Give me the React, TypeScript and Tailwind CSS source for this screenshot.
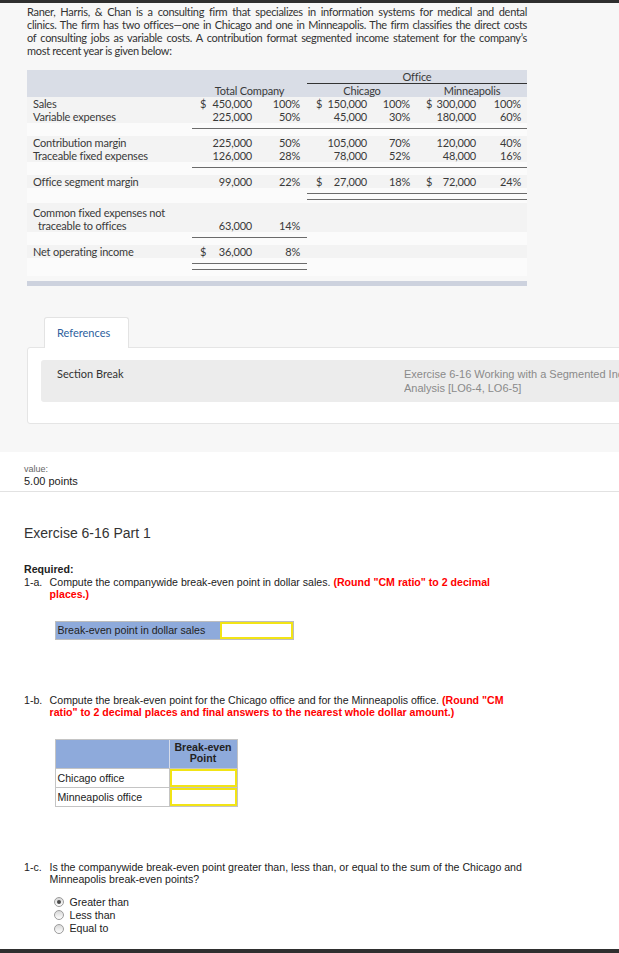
import React from "react";

const PX = "font-['Lato','Noto_Sans',sans-serif]";
const AR = "font-['Liberation_Sans',Arial,sans-serif]";

type G = { d?: boolean; v?: string; p?: string };

function Amt({ g, w }: { g: G; w: string }) {
  return (
    <div className={`${w} flex justify-between`}>
      <span>{g.d ? "$" : ""}</span>
      <span>{g.v ?? ""}</span>
    </div>
  );
}

function Row({
  label,
  t,
  c,
  m,
  bg = "bg-[#f3f3f3]",
}: {
  label: React.ReactNode;
  t?: G;
  c?: G;
  m?: G;
  bg?: string;
}) {
  return (
    <div className={`flex h-[13px] leading-[13px] ${bg}`}>
      <div className="w-[165px] pl-[6px] whitespace-nowrap">{label}</div>
      <div className="w-[115px] flex pl-[8px] pr-[7px]">
        {t && <Amt g={t} w="w-[52px]" />}
        <div className="flex-1 text-right">{t?.p ?? ""}</div>
      </div>
      <div className="w-[110px] flex pl-[9px] pr-[7px]">
        {c && <Amt g={c} w="w-[51px]" />}
        <div className="flex-1 text-right">{c?.p ?? ""}</div>
      </div>
      <div className="w-[110px] flex pl-[9px] pr-[6px]">
        {m && <Amt g={m} w="w-[50px]" />}
        <div className="flex-1 text-right">{m?.p ?? ""}</div>
      </div>
    </div>
  );
}

function RuleAll() {
  return (
    <div className="flex h-[13px] bg-[#fbfbfb]">
      <div className="w-[165px]" />
      <div className="w-[335px] pt-[5px]">
        <div className="h-px bg-[#6b6b6b]" />
      </div>
    </div>
  );
}

function RuleTotal({ double = false }: { double?: boolean }) {
  return (
    <div className={`flex ${double ? "h-[18px]" : "h-[13px]"} bg-[#fbfbfb]`}>
      <div className="w-[165px]" />
      <div className="w-[115px] pt-[5px]">
        <div className="h-px bg-[#6b6b6b]" />
        {double && <div className="h-px bg-[#6b6b6b] mt-[5px]" />}
      </div>
    </div>
  );
}

function RuleOfficeDouble() {
  return (
    <div className="flex h-[15px] bg-[#fbfbfb]">
      <div className="w-[280px]" />
      <div className="w-[220px] pt-[5px]">
        <div className="h-px bg-[#6b6b6b]" />
        <div className="h-px bg-[#6b6b6b] mt-[5px]" />
      </div>
    </div>
  );
}

function Radio({ checked, label }: { checked?: boolean; label: string }) {
  return (
    <div className="flex items-center h-[13.3px]">
      <span className="w-[10px] h-[10px] rounded-full border border-[#9c9c9c] bg-gradient-to-b from-[#d8d8d8] to-[#ffffff] flex items-center justify-center">
        {checked && <span className="w-[4px] h-[4px] rounded-full bg-[#4a4a4a]" />}
      </span>
      <span className="ml-[6px]">{label}</span>
    </div>
  );
}

export default function App() {
  return (
    <div className="w-[619px] h-[953px] overflow-hidden bg-white flex flex-col relative">
      <div className="h-[3px] bg-[#2f2f2f] shrink-0" />

      {/* top grey section */}
      <div className={`h-[449px] shrink-0 bg-[#f7f7f7] pl-[27px] ${PX} text-[#3a3a3a]`}>
        <div className="w-[500px] pt-[2px] text-[11px] leading-[13px] tracking-[-0.3px] text-[#333]">
          <span className="block text-justify [text-align-last:justify]">
            Raner, Harris, &amp; Chan is a consulting firm that specializes in information systems for medical and dental
          </span>
          <span className="block text-justify [text-align-last:justify]">
            clinics. The firm has two offices—one in Chicago and one in Minneapolis. The firm classifies the direct costs
          </span>
          <span className="block text-justify [text-align-last:justify]">
            of consulting jobs as variable costs. A contribution format segmented income statement for the company’s
          </span>
          <span className="block">most recent year is given below:</span>
        </div>

        {/* income statement */}
        <div className="w-[500px] mt-[13px] text-[11px] tracking-[-0.2px]">
          <div className="bg-[#d9dde6]">
            <div className="flex h-[14px] leading-[13px]">
              <div className="w-[280px]" />
              <div className="w-[220px] text-center border-b border-[#333]">Office</div>
            </div>
            <div className="flex h-[13px] leading-[13px]">
              <div className="w-[165px]" />
              <div className="w-[115px] text-center">Total Company</div>
              <div className="w-[110px] text-center">Chicago</div>
              <div className="w-[110px] text-center">Minneapolis</div>
            </div>
          </div>
          <Row
            label="Sales"
            t={{ d: true, v: "450,000", p: "100%" }}
            c={{ d: true, v: "150,000", p: "100%" }}
            m={{ d: true, v: "300,000", p: "100%" }}
          />
          <Row
            label="Variable expenses"
            t={{ v: "225,000", p: "50%" }}
            c={{ v: "45,000", p: "30%" }}
            m={{ v: "180,000", p: "60%" }}
          />
          <RuleAll />
          <Row
            label="Contribution margin"
            t={{ v: "225,000", p: "50%" }}
            c={{ v: "105,000", p: "70%" }}
            m={{ v: "120,000", p: "40%" }}
          />
          <Row
            label="Traceable fixed expenses"
            t={{ v: "126,000", p: "28%" }}
            c={{ v: "78,000", p: "52%" }}
            m={{ v: "48,000", p: "16%" }}
          />
          <RuleAll />
          <Row
            label="Office segment margin"
            t={{ v: "99,000", p: "22%" }}
            c={{ d: true, v: "27,000", p: "18%" }}
            m={{ d: true, v: "72,000", p: "24%" }}
          />
          <RuleOfficeDouble />
          <div className="flex h-[29px] pt-[3px] leading-[13px] bg-[#f3f3f3]">
            <div className="w-[165px] pl-[6px] whitespace-nowrap">
              <div>Common fixed expenses not</div>
              <div className="pl-[5px]">traceable to offices</div>
            </div>
            <div className="w-[115px] flex pl-[8px] pr-[7px] pt-[13px]">
              <div className="w-[52px] text-right">63,000</div>
              <div className="flex-1 text-right">14%</div>
            </div>
          </div>
          <RuleTotal />
          <Row label="Net operating income" t={{ d: true, v: "36,000", p: "8%" }} />
          <RuleTotal double />
        </div>
        <div className="w-[500px] h-[5px] mt-[5px] bg-[#cdd2de]" />

        {/* references */}
        <div className="mt-[31px] relative z-10 ml-[17px] w-[85px] h-[31px] -mb-px bg-white border border-b-0 border-[#e3e3e3] rounded-t-[3px] pl-[12px] pt-[8px] text-[11px] leading-[13px] text-[#2d5f9e]">
          References
        </div>
        <div className="w-[650px] h-[77px] bg-white border border-[#e5e5e5] rounded-[3px] pt-[12px] pl-[13px]">
          <div className="h-[42px] bg-[#ececec] rounded-[3px] flex pt-[7px]">
            <div className="w-[363px] shrink-0 pl-[16px] text-[11px] leading-[14px] text-[#333]">Section Break</div>
            <div className={`${AR} w-[240px] shrink-0 text-[11px] leading-[14px] text-[#8a8a8a] whitespace-nowrap overflow-hidden`}>
              <div>Exercise 6-16 Working with a Segmented Income Statement and Break-Even</div>
              <div>Analysis [LO6-4, LO6-5]</div>
            </div>
          </div>
        </div>
      </div>

      {/* lower white section */}
      <div className={`${AR} text-[#222] shrink-0`}>
        <div className="pl-[24px] pb-[3px] border-b border-[#e2e2e2]">
          <div className="mt-[12px] text-[9px] leading-[11px] text-[#666]">value:</div>
          <div className="text-[11px] leading-[13px] text-[#222]">5.00 points</div>
        </div>

        <div className="pl-[24px] text-[10.6px] leading-[12.5px]">
          <div className="mt-[33px] text-[14px] leading-[17px] text-[#333]">Exercise 6-16 Part 1</div>

          <div className="mt-[21px] font-bold">Required:</div>
          <div className="flex">
            <div className="w-[25.6px] shrink-0">1-a.</div>
            <div>
              Compute the companywide break-even point in dollar sales.{" "}
              <span className="font-bold text-[#ff0000]">
                (Round "CM ratio" to 2 decimal
                <br />
                places.)
              </span>
            </div>
          </div>

          <div className="mt-[20px] ml-[30.5px] w-[239px] h-[19px] flex border border-[#bdbdbd]">
            <div className="w-[164px] bg-[#8eaadb] pl-[2px] leading-[17px]">Break-even point in dollar sales</div>
            <div className="flex-1 bg-white border-2 border-[#f2e415]" />
          </div>

          <div className="flex mt-[54px]">
            <div className="w-[25.6px] shrink-0">1-b.</div>
            <div>
              Compute the break-even point for the Chicago office and for the Minneapolis office.{" "}
              <span className="font-bold text-[#ff0000]">
                (Round "CM
                <br />
                ratio" to 2 decimal places and final answers to the nearest whole dollar amount.)
              </span>
            </div>
          </div>

          <div className="mt-[20px] ml-[30.5px] w-[183px] border border-[#c4c4c4] bg-white">
            <div className="flex h-[28px]">
              <div className="w-[114px] bg-[#8eaadb] border-r border-[#d6dcea]" />
              <div className="flex-1 bg-[#8eaadb] font-bold text-center leading-[11.6px] pt-[2px] text-[#222]">
                Break-even
                <br />
                Point
              </div>
            </div>
            <div className="flex h-[19px] border-t border-[#c4c4c4]">
              <div className="w-[114px] pl-[2px] leading-[18px] border-r border-[#c4c4c4]">Chicago office</div>
              <div className="flex-1 border-2 border-[#f2e415]" />
            </div>
            <div className="flex h-[19px] border-t border-[#c4c4c4]">
              <div className="w-[114px] pl-[2px] leading-[18px] border-r border-[#c4c4c4]">Minneapolis office</div>
              <div className="flex-1 border-2 border-[#f2e415]" />
            </div>
          </div>

          <div className="flex mt-[54px]">
            <div className="w-[25.6px] shrink-0">1-c.</div>
            <div>
              Is the companywide break-even point greater than, less than, or equal to the sum of the Chicago and
              <br />
              Minneapolis break-even points?
            </div>
          </div>

          <div className="mt-[10px] ml-[29.5px]">
            <Radio checked label="Greater than" />
            <Radio label="Less than" />
            <Radio label="Equal to" />
          </div>
        </div>
      </div>

      <div className="flex-1" />
      <div className="h-[4px] bg-[#2f2f2f] shrink-0" />
    </div>
  );
}
